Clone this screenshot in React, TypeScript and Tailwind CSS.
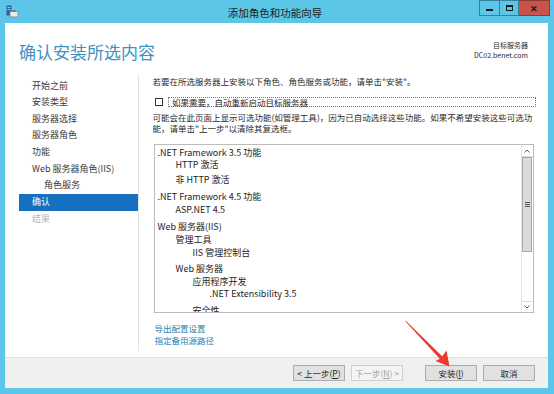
import React from "react";

const steps = [
  { label: "开始之前", cls: "pl-[13px] text-[#3a3a3a]" },
  { label: "安装类型", cls: "pl-[13px] text-[#3a3a3a]" },
  { label: "服务器选择", cls: "pl-[13px] text-[#3a3a3a]" },
  { label: "服务器角色", cls: "pl-[13px] text-[#3a3a3a]" },
  { label: "功能", cls: "pl-[13px] text-[#3a3a3a]" },
  { label: "Web 服务器角色(IIS)", cls: "pl-[13px] text-[#3a3a3a]" },
  { label: "角色服务", cls: "pl-[25px] text-[#3a3a3a]" },
  { label: "确认", cls: "pl-[13px] text-white bg-[#1570bf]" },
  { label: "结果", cls: "pl-[13px] text-[#b4b4b4]" },
];

const items = [
  { text: ".NET Framework 3.5 功能", cls: "pl-[3px]" },
  { text: "HTTP 激活", cls: "pl-[21px]" },
  { text: "非 HTTP 激活", cls: "pl-[21px] mt-[3px]" },
  { text: ".NET Framework 4.5 功能", cls: "pl-[3px] mt-[5px]" },
  { text: "ASP.NET 4.5", cls: "pl-[21px] mt-[1px]" },
  { text: "Web 服务器(IIS)", cls: "pl-[3px] mt-[5px]" },
  { text: "管理工具", cls: "pl-[21px] mt-[1px]" },
  { text: "IIS 管理控制台", cls: "pl-[38px] mt-[1px]" },
  { text: "Web 服务器", cls: "pl-[21px] mt-[4px]" },
  { text: "应用程序开发", cls: "pl-[38px] mt-[1px]" },
  { text: ".NET Extensibility 3.5", cls: "pl-[55px]" },
  { text: "安全性", cls: "pl-[38px] mt-[5px]" },
];

const TitleIcon = () => (
  <svg width="13" height="13" viewBox="0 0 13 13">
    <rect x="0.5" y="0.5" width="5" height="10" fill="#2f5f9e" />
    <rect x="1.5" y="2" width="3" height="1" fill="#9cc4ec" />
    <rect x="1.5" y="4" width="3" height="1" fill="#9cc4ec" />
    <rect x="3.5" y="6" width="9" height="6.5" fill="#8a8f96" />
    <rect x="4.5" y="7" width="7" height="4.5" fill="#e9ecef" />
    <rect x="6.5" y="5" width="3" height="1.5" fill="#6c7178" />
  </svg>
);

export default function App() {
  return (
    <div className="relative w-[554px] h-[394px] overflow-hidden bg-[#5cc6e8] flex flex-col font-['Noto_Sans_CJK_SC','Noto_Sans',sans-serif]">
      {/* title bar */}
      <div className="grid grid-cols-[1fr_auto_1fr] h-[23px] shrink-0 pr-[4px]">
        <div className="pl-[6px] pt-[5px]">
          <TitleIcon />
        </div>
        <div className="text-[10.5px] leading-[23px] text-[#1e1e1e] pt-[1px]">添加角色和功能向导</div>
        <div className="flex justify-end items-start">
          <div className="w-[21px] h-[16px] border border-[#3b7f99] flex items-end justify-center pb-[4px]">
            <div className="w-[7px] h-[2px] bg-[#1a1a1a]" />
          </div>
          <div className="w-[19px] h-[16px] border border-l-0 border-[#3b7f99] flex items-center justify-center">
            <div className="w-[7px] h-[6px] border border-t-2 border-[#1a1a1a]" />
          </div>
          <div className="w-[31px] h-[16px] bg-[#c9534c] border border-l-0 border-[#8e3b36] flex items-center justify-center text-[9px] font-bold text-[#1a1a1a] leading-none">
            ✕
          </div>
        </div>
      </div>

      {/* client */}
      <div className="flex-1 ml-[5px] mr-[6px] mb-[6px] bg-white flex flex-col">
        {/* header */}
        <div className="h-[49px] shrink-0 flex justify-between">
          <div className="pl-[14px] pt-[19px] text-[17px] leading-[20px] text-[#3e91c3]">确认安装所选内容</div>
          <div className="pr-[20px] pt-[18px] text-right text-[7px] leading-[9.5px] text-[#2a2a2a]">
            <div>目标服务器</div>
            <div>DC02.benet.com</div>
          </div>
        </div>

        {/* body */}
        <div className="flex-1 flex pt-[3px] pb-[6px] min-h-0">
          <div className="w-[134px] shrink-0 border-r border-[#e2e2e2] pt-[2.5px] text-[9px]">
            {steps.map((s) => (
              <div key={s.label} className={`ml-[14px] h-[16.67px] leading-[16.67px] ${s.cls}`}>
                {s.label}
              </div>
            ))}
          </div>

          <div className="flex-1 pl-[13.5px] pr-[12px] text-[8.5px] text-[#2a2a2a]">
            <div className="leading-[12px]">若要在所选服务器上安装以下角色、角色服务或功能，请单击"安装"。</div>

            <div className="mt-[9.5px] flex items-center h-[10.5px]">
              <div className="ml-[2.5px] w-[8px] h-[8px] border border-[#333] bg-white shrink-0" />
              <div className="ml-[5px] flex-1 h-full border border-dotted border-[#777] pl-[3px] leading-[9px]">
                如果需要，自动重新启动目标服务器
              </div>
            </div>

            <div className="mt-[5px] leading-[11px]">
              可能会在此页面上显示可选功能(如管理工具)，因为已自动选择这些功能。如果不希望安装这些可选功
              <br />
              能，请单击"上一步"以清除其复选框。
            </div>

            {/* selection list */}
            <div className="mt-[10px] ml-[1px] w-[380px] h-[169px] border border-[#bcbcbc] flex overflow-hidden">
              <div className="flex-1 pt-[2px] text-[9px] leading-[12px] text-[#1e1e1e] overflow-hidden">
                {items.map((it) => (
                  <div key={it.text} className={`whitespace-nowrap ${it.cls}`}>
                    {it.text}
                  </div>
                ))}
              </div>
              <div className="w-[12px] shrink-0 flex flex-col bg-white border-l border-[#e6e6e6]">
                <div className="h-[12px] border-b border-[#dcdcdc] flex items-center justify-center">
                  <svg width="6" height="4" viewBox="0 0 6 4">
                    <path d="M0.5 3.5 L3 1 L5.5 3.5" stroke="#606060" fill="none" />
                  </svg>
                </div>
                <div className="h-[95px] mx-[0.5px] bg-[#dadada] border border-[#a9a9a9] flex items-center justify-center">
                  <svg width="5" height="5" viewBox="0 0 5 5">
                    <path d="M0 0.5 H5 M0 2.5 H5 M0 4.5 H5" stroke="#555" />
                  </svg>
                </div>
                <div className="flex-1" />
                <div className="h-[11px] border-t border-[#dcdcdc] flex items-center justify-center">
                  <svg width="6" height="4" viewBox="0 0 6 4">
                    <path d="M0.5 0.5 L3 3 L5.5 0.5" stroke="#606060" fill="none" />
                  </svg>
                </div>
              </div>
            </div>

            <div className="mt-[8.5px] pl-[2px] leading-[12px] text-[#2684b2]">
              <div>导出配置设置</div>
              <div>指定备用源路径</div>
            </div>
          </div>
        </div>

        {/* footer */}
        <div className="h-[31px] shrink-0 bg-[#f0f0f0] border-t border-[#e0e0e0] flex items-center justify-end pr-[13px] text-[8.5px]">
          <div className="w-[52px] h-[16px] bg-[#e1e1e1] border border-[#adadad] flex items-center justify-center text-[#1e1e1e]">
            &lt; 上一步(<span className="underline">P</span>)
          </div>
          <div className="ml-[6px] w-[52px] h-[16px] bg-[#f4f4f4] border border-[#cfcfcf] flex items-center justify-center text-[#a2a2a2]">
            下一步(<span className="underline">N</span>) &gt;
          </div>
          <div className="ml-[22px] w-[52px] h-[16px] bg-[#e1e1e1] border border-[#adadad] flex items-center justify-center text-[#1e1e1e]">
            安装(<span className="underline">I</span>)
          </div>
          <div className="ml-[6px] w-[52px] h-[16px] bg-[#e1e1e1] border border-[#adadad] flex items-center justify-center text-[#1e1e1e]">
            取消
          </div>
        </div>
      </div>

      {/* annotation arrow */}
      <svg className="absolute inset-0 pointer-events-none" width="554" height="394" viewBox="0 0 554 394">
        <polygon
          points="405.8,320.7 442.2,356.3 446.5,350.5 449.5,366.5 435.5,361 439.8,358.7 405.2,321.3"
          fill="#ea3a30"
        />
      </svg>
    </div>
  );
}
